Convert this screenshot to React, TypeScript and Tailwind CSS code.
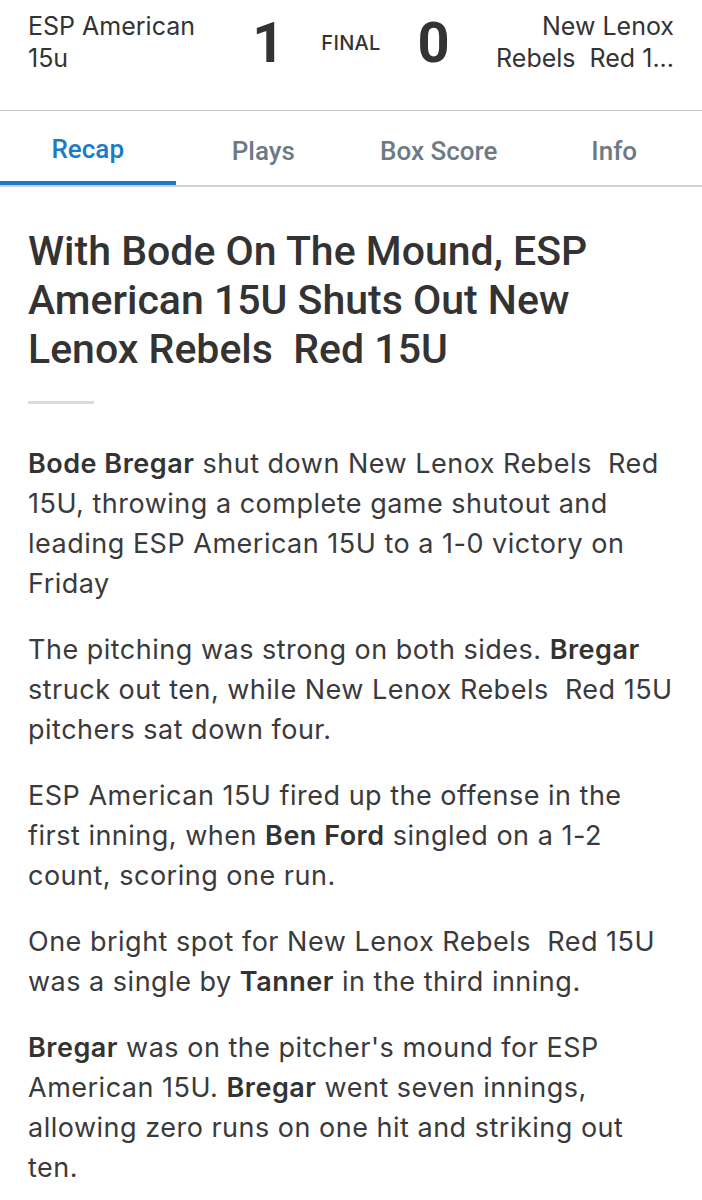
const paragraphs: { parts: { t: string; b?: boolean }[] }[] = [
  {
    parts: [
      { t: 'Bode Bregar', b: true },
      { t: ' shut down New Lenox Rebels\u00a0 Red 15U, throwing a complete game shutout and leading ESP American 15U to a 1-0 victory on Friday' },
    ],
  },
  {
    parts: [
      { t: 'The pitching was strong on both sides. ' },
      { t: 'Bregar', b: true },
      { t: ' struck out ten, while New Lenox Rebels\u00a0 Red 15U pitchers sat down four.' },
    ],
  },
  {
    parts: [
      { t: 'ESP American 15U fired up the offense in the first inning, when ' },
      { t: 'Ben Ford', b: true },
      { t: ' singled on a 1-2 count, scoring one run.' },
    ],
  },
  {
    parts: [
      { t: 'One bright spot for New Lenox Rebels\u00a0 Red 15U was a single by ' },
      { t: 'Tanner', b: true },
      { t: ' in the third inning.' },
    ],
  },
  {
    parts: [
      { t: 'Bregar', b: true },
      { t: " was on the pitcher's mound for ESP American 15U. " },
      { t: 'Bregar', b: true },
      { t: ' went seven innings, allowing zero runs on one hit and striking out ten.' },
    ],
  },
];

const tabs = ['Recap', 'Plays', 'Box Score', 'Info'];

export default function App() {
  return (
    <div className="w-[702px] min-h-[1200px] bg-white text-[#3a3a3c]">
      {/* Score header */}
      <div className="h-[111px] px-[28px] pt-[10px] flex items-start justify-between border-b border-[#c8c8cc]">
        <div className="w-[190px] font-['Inter',sans-serif] text-[25px] leading-[32px] text-[#333]">
          ESP American
          <br />
          15u
        </div>
        <div className="flex items-center h-[66px] font-['Roboto',sans-serif]">
          <span className="text-[56px] font-bold text-[#333] w-[40px] text-center">1</span>
          <span className="font-['Inter',sans-serif] text-[20px] font-medium text-[#333] mx-[33px] tracking-[0.3px]">FINAL</span>
          <span className="text-[56px] font-bold text-[#333] w-[40px] text-center">0</span>
        </div>
        <div className="w-[190px] text-right font-['Inter',sans-serif] text-[25px] leading-[32px] text-[#333]">
          <div>New Lenox</div>
          <div className="truncate">Rebels&nbsp; Red 1...</div>
        </div>
      </div>

      {/* Tabs */}
      <div className="flex border-b-2 border-[#d1d1d6] font-['Roboto',sans-serif]">
        {tabs.map((t, i) => (
          <div
            key={t}
            className={
              i === 0
                ? 'flex-1 h-[74px] flex items-center justify-center text-[26px] font-medium text-[#1a7bc9] border-b-4 border-[#1a7bc9] mb-[-2px] pt-[6px]'
                : 'flex-1 h-[74px] flex items-center justify-center text-[26px] font-medium text-[#6c7a86] pt-[6px]'
            }
          >
            {t}
          </div>
        ))}
      </div>

      {/* Article */}
      <div className="px-[28px] pt-[40px]">
        <h1 className="font-['Roboto',sans-serif] font-medium text-[41px] leading-[49px] text-[#333]">
          With Bode On The Mound, ESP American 15U Shuts Out New Lenox Rebels&nbsp; Red 15U
        </h1>
        <div className="w-[66px] h-[3px] bg-[#d3dde3] mt-[27px] mb-[40px]" />
        <div className="font-['Inter',sans-serif] text-[27px] leading-[40px] tracking-[0.5px] text-[#3a3a3c] flex flex-col gap-[26px]">
          {paragraphs.map((p, i) => (
            <p key={i}>
              {p.parts.map((s, j) =>
                s.b ? (
                  <span key={j} className="font-semibold text-[#333]">
                    {s.t}
                  </span>
                ) : (
                  <span key={j}>{s.t}</span>
                )
              )}
            </p>
          ))}
        </div>
      </div>
    </div>
  );
}
